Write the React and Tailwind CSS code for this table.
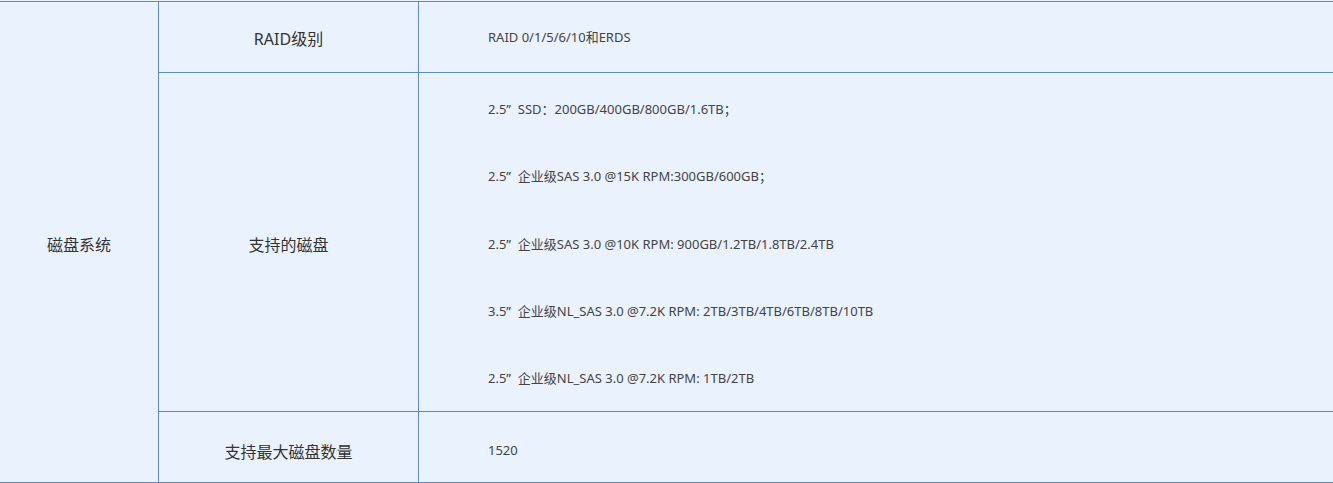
import React from "react";

const disks = [
  "2.5”  SSD：200GB/400GB/800GB/1.6TB；",
  "2.5”  企业级SAS 3.0 @15K RPM:300GB/600GB；",
  "2.5”  企业级SAS 3.0 @10K RPM: 900GB/1.2TB/1.8TB/2.4TB",
  "3.5”  企业级NL_SAS 3.0 @7.2K RPM: 2TB/3TB/4TB/6TB/8TB/10TB",
  "2.5”  企业级NL_SAS 3.0 @7.2K RPM: 1TB/2TB",
];

const App = () => {
  return (
    <div
      className="w-full h-[483px] bg-[#eaf2fe] pt-px"
      style={{ fontFamily: '"Noto Sans", "Noto Sans CJK SC", sans-serif' }}
    >
      <div className="grid grid-cols-[158px_259px_1fr] grid-rows-[70px_338px_70px] gap-px bg-[#5a8bc4] py-px">
        {/* 左侧分类 */}
        <div className="row-span-3 bg-[#eaf2fe] flex items-center justify-center pt-[6px] text-[16px] text-[#333]">
          磁盘系统
        </div>

        {/* RAID */}
        <div className="bg-[#eaf2fe] flex items-center justify-center pt-[3px] text-[16px] text-[#333]">
          RAID级别
        </div>
        <div className="bg-[#eaf2fe] flex items-center pl-[69px] pt-[2px] text-[13px] text-[#444]">
          RAID 0/1/5/6/10和ERDS
        </div>

        {/* 支持的磁盘 */}
        <div className="bg-[#eaf2fe] flex items-center justify-center pt-[6px] text-[16px] text-[#333]">
          支持的磁盘
        </div>
        <div className="bg-[#eaf2fe] flex flex-col pl-[69px] pt-[26px] gap-[47.25px] text-[13px] text-[#444]">
          {disks.map((d) => (
            <p key={d} className="leading-[20px] whitespace-pre">{d}</p>
          ))}
        </div>

        {/* 最大磁盘数 */}
        <div className="bg-[#eaf2fe] flex items-center justify-center pt-[9px] text-[16px] text-[#333]">
          支持最大磁盘数量
        </div>
        <div className="bg-[#eaf2fe] flex items-center pl-[69px] pt-[8px] text-[13px] text-[#444]">
          1520
        </div>
      </div>
    </div>
  );
};

export default App;
